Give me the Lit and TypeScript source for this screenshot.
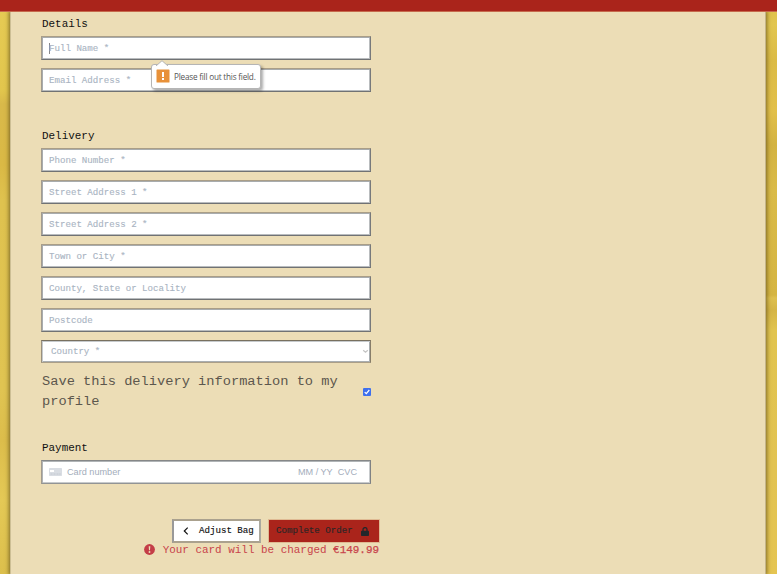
import { LitElement, html, css } from "lit";
import { customElement, property } from "lit/decorators.js";

@customElement("form-field")
class FormField extends LitElement {
  @property() label = "";
  @property({ type: Boolean }) focused = false;
  @property({ type: Boolean }) select = false;

  static styles = css`
    :host { display: block; height: 24px; margin-bottom: 8px; }
    .box {
      box-sizing: border-box; height: 24px; display: flex; align-items: center;
      background: #fff; border: 1px solid; border-color: #aa9e87 #77797b #707274 #a39b8e;
      box-shadow: inset 1px 1px 0 #a8acae, inset -1px -1px 0 #b9bcbe;
      padding: 1px 7px 0; color: #a9b4c2;
      font: 9.13px/14px "Courier New", "Liberation Mono", monospace;
    }
    .select { height: 23px; padding: 0 1px 0 9px; justify-content: space-between;
      border-color: #78705f #877d69 #aa9e87 #9a907d;
      box-shadow: inset 1px 1px 0 #c6cacd, inset -1px -1px 0 #a9aeb1; }
    .caret { width: 1px; height: 11px; background: #888; margin-right: -1px; }
    .text { white-space: pre; -webkit-text-stroke: .12px #a9b4c2; }
    svg { width: 7px; height: 5px; }
  `;

  render() {
    return html`<div class="box ${this.select ? "select" : ""}">
      ${this.focused ? html`<span class="caret"></span>` : ""}
      <span class="text">${this.label}</span>
      ${this.select
        ? html`<svg viewBox="0 0 7 5"><path d="M1.2 1.2 3.5 3.2 5.8 1.2" fill="none" stroke="#c4c4c4" stroke-width="1.2"/></svg>`
        : ""}
    </div>`;
  }
}

@customElement("app-root")
class AppRoot extends LitElement {
  static styles = css`
    :host { display: block; height: 574px; overflow: hidden; }
    .page {
      height: 574px; display: flex; flex-direction: column; overflow: hidden;
      font: 10.93px/16px "Courier New", "Liberation Mono", monospace; color: #111;
      background:
        linear-gradient(#e6cb55 0, #e2c64d 90px, #d9b94a 104px, #dab945 165px, #dfc24f 200px,
          #e0c452 390px, #dcbd4b 440px, #e4c956 500px, #dcbf4c 574px) left / 11px 100% no-repeat,
        linear-gradient(#dec04b 0, #e2c650 25px, #dbbb46 60px, #e2c04a 110px, #d3b342 145px, #dabb48 190px,
          #d5b542 295px, #dec04f 298px, #d5b546 310px, #e1c44f 330px, #e2c352 470px, #e5c552 574px) right / 12px 100% no-repeat;
    }
    .bar { flex: none; height: 11px; background: #aa241b; border-bottom: 1px solid #c6694c; z-index: 1; }
    .panel {
      box-sizing: border-box; flex: 1; margin: 0 11px 0 10px; padding: 4px 0 0 30px;
      background: #ecddb6; border-left: 1px solid #cdbf95; border-right: 1px solid #c4b489;
      box-shadow: 0 0 4px 1px #4b3c10a8;
    }
    .form { width: 330px; }
    .legend { height: 16px; margin: 0 0 4px 1px; }
    .details { position: relative; height: 112px; }
    .delivery { height: 244px; }
    .save { display: flex; align-items: center; justify-content: space-between;
      height: 40px; margin-bottom: 28px; padding-left: 1px;
      font-size: 13.7px; line-height: 20px; color: #5c574d; }
    .save span { width: 305px; }
    .check { width: 8px; height: 8px; margin: 0 0 1px; flex: none; }
    .card {
      box-sizing: border-box; height: 24px; display: flex; align-items: center;
      background: #fff; border: 1px solid; border-color: #858788 #7f8183 #929495 #a39b8e;
      box-shadow: inset 1px 1px 0 #b0b4b6, inset -1px -1px 0 #c7cacc;
      padding: 0 13px 0 7px; color: #a3adbb; font: 9.15px/14px "Liberation Sans", Arial, sans-serif;
    }
    .card svg { width: 13px; height: 8px; margin-right: 5px; }
    .number { flex: 1; }
    .cvc { margin-left: 5px; }
    .tip {
      position: absolute; left: 110px; top: 48px; width: 110px; height: 25px; box-sizing: border-box;
      display: flex; align-items: center; gap: 4px; padding: 0 0 0 4px; background: #fff;
      border: 1px solid #b5b5b5; border-radius: 3px; box-shadow: 2px 2px 3px #0005;
      font: 8.2px/12px "Open Sans", "Noto Sans", sans-serif; letter-spacing: -.22px; color: #555; white-space: nowrap;
    }
    .arrow { position: absolute; left: 4px; top: -5px; width: 12px; height: 6px; }
    .warn { width: 14px; height: 14px; flex: none; margin-top: -2px; }
    .tip span { padding-top: 1px; }
    .actions { width: 338px; display: flex; justify-content: flex-end; gap: 8px; margin-top: 35px; height: 24px; }
    .btn { box-sizing: border-box; display: flex; align-items: center; height: 24px; font-size: 9.15px; white-space: pre;
      -webkit-text-stroke: .15px currentColor; }
    .back { width: 89px; padding: 0 0 0 9px; border: 2px solid; border-color: #aaa18e #aaa99f #aaa18e #999; background: #fff; color: #111; }
    .back svg { width: 6px; height: 8px; margin-right: 10px; }
    .order { width: 110px; height: 22px; margin-top: 1px; padding: 0 0 0 7px; background: #aa241b; color: #2c2427; box-shadow: 0 0 0 1px #dfba93; }
    .order svg { width: 8px; height: 9px; margin-left: 8px; }
    .charge { width: 338px; display: flex; justify-content: flex-end; align-items: center; height: 14px; color: #c8444b; white-space: pre; }
    .charge svg { width: 11px; height: 11px; margin: -2px 8px 0 0; }
    .amount { -webkit-text-stroke: .25px #c8444b; }
  `;

  render() {
    const fields = ["Phone Number *", "Street Address 1 *", "Street Address 2 *", "Town or City *", "County, State or Locality", "Postcode"];
    return html`<div class="page">
      <div class="bar"></div>
      <main class="panel">
        <div class="form">
          <section class="details">
            <div class="legend">Details</div>
            <form-field label="Full Name *" focused></form-field>
            <form-field label="Email Address *"></form-field>
            <div class="tip">
              <svg class="arrow" viewBox="0 0 12 6"><path d="M0 6 6 .7 12 6" fill="#fff" stroke="#b5b5b5"/></svg>
              <svg class="warn" viewBox="0 0 14 14"><rect x=".5" y=".5" width="13" height="13" rx=".6" fill="#e89139"/><path d="M6 3h2v5H6zM6 9h2v2H6z" fill="#fff"/></svg>
              <span>Please fill out this field.</span>
            </div>
          </section>
          <section class="delivery">
            <div class="legend">Delivery</div>
            ${fields.map((f) => html`<form-field label=${f}></form-field>`)}
            <form-field label="Country *" select></form-field>
          </section>
          <div class="save">
            <span>Save this delivery information to my profile</span>
            <svg class="check" viewBox="0 0 8 8"><rect width="8" height="8" rx="1" fill="#3f70ed"/><path d="m1.7 4.1 1.6 1.6 3-3.7" fill="none" stroke="#fff" stroke-width="1.2"/></svg>
          </div>
          <div class="legend">Payment</div>
          <div class="card">
            <svg viewBox="0 0 13 8"><rect width="13" height="8" rx=".7" fill="#d9dde3"/><rect x="1" y="2" width="4" height="2" fill="#fff"/><path d="M1.5 6h2M4.5 6h2M7.5 6h2M10.2 6h1.5" stroke="#c3c8d0"/></svg>
            <span class="number">Card number</span><span>MM / YY</span><span class="cvc">CVC</span>
          </div>
        </div>
        <div class="actions">
          <div class="btn back"><svg viewBox="0 0 6 8"><path d="M4.7.6 1.3 4l3.4 3.4" fill="none" stroke="#111" stroke-width="1.2"/></svg>Adjust Bag</div>
          <div class="btn order">Complete Order<svg viewBox="0 0 8 9"><path d="M2 4V2.6a2 2 0 0 1 4 0V4" fill="none" stroke="#23272b" stroke-width="1.3"/><rect y="3.8" width="8" height="5.2" rx=".8" fill="#23272b"/></svg></div>
        </div>
        <div class="charge"><svg viewBox="0 0 11 11"><circle cx="5.5" cy="5.5" r="5.4" fill="#c43d47"/><path d="M4.7 2.2h1.6L6 6.2H5z" fill="#ecddb6"/><circle cx="5.5" cy="8" r=".95" fill="#ecddb6"/></svg><span>Your card will be charged </span><span class="amount">€149.99</span></div>
      </main>
    </div>`;
  }
}
